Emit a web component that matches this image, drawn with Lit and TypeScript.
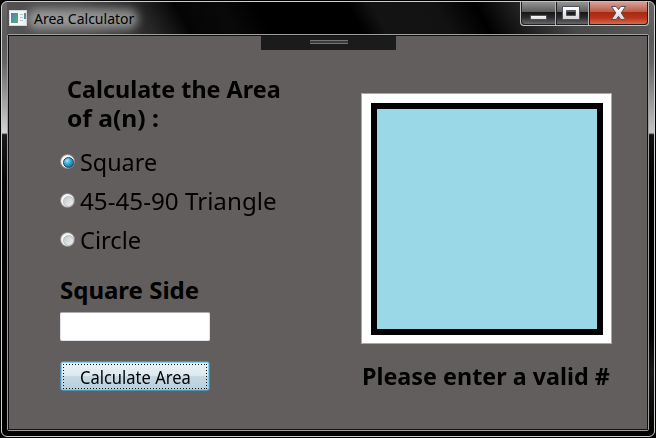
import { LitElement, html, css } from "lit";
import { customElement, state } from "lit/decorators.js";

@customElement("caption-buttons")
class CaptionButtons extends LitElement {
  static styles = css`
    :host { display: block; width: 129px; height: 25px; }
    svg { display: block; }
  `;
  render() {
    return html`<svg width="129" height="25" viewBox="0 0 129 25">
      <defs>
        <linearGradient id="g" x1="0" y1="0" x2="0" y2="1">
          <stop offset="0" stop-color="#949494"/><stop offset=".45" stop-color="#5c5c5c"/>
          <stop offset=".47" stop-color="#161616"/><stop offset=".7" stop-color="#2b2b2d"/><stop offset="1" stop-color="#68686a"/>
        </linearGradient>
        <linearGradient id="r" x1="0" y1="0" x2="0" y2="1">
          <stop offset="0" stop-color="#d6a097"/><stop offset=".45" stop-color="#bd5a47"/>
          <stop offset=".47" stop-color="#a72a12"/><stop offset=".72" stop-color="#b9331a"/><stop offset="1" stop-color="#dc6949"/>
        </linearGradient>
        <linearGradient id="w" x1="0" y1="0" x2="0" y2="1">
          <stop offset="0" stop-color="#fff"/><stop offset="1" stop-color="#d6d6d6"/>
        </linearGradient>
      </defs>
      <path d="M0 0H129V21Q129 25 125 25H4Q0 25 0 21Z" fill="#c0c0c0"/>
      <path d="M1 1H128V20.500Q128 24 124.500 24H4.500Q1 24 1 20.500Z" fill="#202022"/>
      <path d="M2 1H35V23H5Q2 23 2 20Z" fill="url(#g)"/>
      <rect x="37" y="1" width="31" height="22" fill="url(#g)"/>
      <path d="M70 1H127V20Q127 23 124 23H70Z" fill="url(#r)"/>
      <path d="M35.500 1V24M68.500 1V24" stroke="#b4b4b4"/>
      <rect x="10.500" y="14.500" width="16" height="4" rx=".5" fill="url(#w)" stroke="#50535c"/>
      <path d="M42.500 5.500h17v13h-17zM46.500 9.500v5h9v-5z" fill="url(#w)" fill-rule="evenodd" stroke="#50535c"/>
      <path d="M91.500 5.500H96.200L98.500 8.500L100.800 5.500H105.500L101.200 11.900L105.600 18.500H100.800L98.500 15.300L96.200 18.500H91.400L95.800 11.900Z" fill="url(#w)" stroke="#50535c"/>
    </svg>`;
  }
}

@customElement("app-root")
class AppRoot extends LitElement {
  @state() private selected = 0;
  private shapes = ["Square", "45-45-90 Triangle", "Circle"];
  private widths = ["w-square", "w-triangle", "w-circle"];

  static styles = css`
    * { box-sizing: border-box; }
    :host {
      display: block; width: 656px; height: 438px; overflow: hidden; background: #000;
      color: #000; font-family: "Noto Sans", "Open Sans", sans-serif;
    }
    .window {
      position: relative; width: 654px; height: 436px; margin: 1px 0 0 1px;
      border: 1px solid #cfcfcf; border-radius: 6px; padding: 0 5px 5px;
      background:
        linear-gradient(#666 0, #5a5a5a 40px, #646464 60px, #d4d4d4 131px, #444 132px, #1a1a1a 133px, #050505 180px, #000 100%) 0 0 / 5px 100% no-repeat,
        linear-gradient(#666 0, #5a5a5a 40px, #646464 60px, #c4c4c4 131px, #444 132px, #111 133px, #000 180px, #000 330px, #181818 370px, #000 100%) 100% 0 / 5px 100% no-repeat,
        linear-gradient(60deg, #555 0, #494949 80px, #252525 135px, #050505 165px, #090909 205px, #000 235px, #000 315px, #131313 335px, #121212 390px, #000 425px, #1c1c1c 455px, #484848 500px, #5c5c5c 100%) 0 0 / 100% 34px no-repeat,
        #030303;
    }
    .titlebar { display: flex; height: 32px; justify-content: space-between; }
    .title { display: flex; align-items: flex-start; padding: 8px 0 0 2px; }
    .title svg { display: block; flex: none; }
    .name {
      position: relative; margin-left: 7px; height: 18px; line-height: 18px;
      font-size: 14px; white-space: nowrap; z-index: 0;
    }
    .name::before {
      content: ""; position: absolute; z-index: -1; left: -6px; top: -1px; width: 110px; height: 20px;
      background: rgba(180,180,180,.72); filter: blur(5px); border-radius: 9px;
    }
    caption-buttons { margin: -1px 0 0 0; }
    .client {
      width: 642px; height: 397px; border: 1px solid #a0a0a0; border-radius: 2px;
    }
    .pane {
      position: relative; display: flex; width: 640px; height: 395px; border: 1px solid #101010; background: #625e5d;
    }
    .handle {
      position: absolute; left: 252px; top: 0; width: 135px; height: 14px; background: #1b1b1b;
      display: flex; justify-content: center; padding: 4px 0 0 1px;
    }
    .grip { width: 38px; height: 4px; border: 1px solid #737373; border-width: 1px 0; background: #3c3c3c; }
    .form { width: 352px; padding: 38px 0 0 51px; }
    .t { display: inline-block; transform-origin: 0 0; white-space: nowrap; }
    .heading { margin: 0 0 0 7px; font-size: 24px; line-height: 29px; font-weight: 700; }
    .heading .t { display: block; }
    .h1 { transform: scaleX(.973); }
    .h2 { transform: scaleX(1.025); }
    .w-square { transform: scaleX(.973); }
    .w-triangle { transform: scaleX(1.008); }
    .w-circle { transform: scaleX(.985); }
    .calc { transform: scaleX(.917); }
    .msg { transform: scaleX(.972); }
    .options { display: flex; flex-direction: column; margin-top: 10px; }
    .option { display: flex; height: 39px; align-items: flex-start; font-size: 24px; line-height: 40px; }
    .dot {
      width: 15px; height: 15px; margin: 12px 5px 0 0; border-radius: 50%; flex: none;
      border: 1px solid #858383; padding: 2px; background: #f6f6f6;
    }
    .dot::before {
      content: ""; display: block; width: 9px; height: 9px; border-radius: 50%;
      border: 1px solid #b8babc; background: linear-gradient(135deg, #c5c9cd, #f1f1f1);
    }
    .dot.on::before { border-color: #16435c; background: radial-gradient(circle at 35% 30%, #a5e4f7 0, #31a3cf 45%, #0a5680 100%); }
    .label { height: 39px; margin-top: 14px; line-height: 34px; font-size: 24px; font-weight: 700; }
    .field { display: block; width: 150px; height: 29px; border: 1px solid #e2e3ea; border-top-color: #abadb3; border-radius: 2px; background: #fff; padding: 2px 4px; outline: none; font: inherit; }
    .button {
      display: flex; width: 150px; height: 30px; margin-top: 20px; padding: 1px; border: 1px solid #4f8eb5; border-radius: 3px;
      background: linear-gradient(#ecf4f8 0, #dce9ef 48%, #c5d9e3 52%, #b6d0de 100%); box-shadow: inset 0 0 0 1px #83d0ee;
      font: inherit; font-size: 18px; color: #000;
    }
    .focus {
      flex: 1; height: 26px; margin: 0 1px; line-height: 28px; padding-left: 17px; text-align: left;
      background:
        repeating-linear-gradient(90deg, #111 0 1px, transparent 1px 3px) 0 1px / 100% 1px no-repeat,
        repeating-linear-gradient(90deg, #111 0 1px, transparent 1px 3px) 0 100% / 100% 1px no-repeat,
        repeating-linear-gradient(#111 0 1px, transparent 1px 3px) 0 1px / 1px 100% no-repeat,
        repeating-linear-gradient(#111 0 1px, transparent 1px 3px) 100% 1px / 1px 100% no-repeat;
    }
    .result { padding-top: 57px; }
    .canvas { width: 251px; height: 251px; background: #fff; border: 1px solid #a9a7a6; padding: 9px; }
    .square { width: 232px; height: 232px; border: 6px solid #000; background: #9ad8e8; }
    .message { height: 34px; line-height: 34px; margin: 15px 0 0 1px; font-size: 24px; font-weight: 700; }
  `;

  render() {
    return html`<div class="window">
      <div class="titlebar">
        <div class="title">
          <svg width="18" height="16" viewBox="0 0 18 16">
            <defs><linearGradient id="i" x1="0" y1="0" x2="1" y2="1"><stop offset="0" stop-color="#4a7fb0"/><stop offset="1" stop-color="#5fae7c"/></linearGradient></defs>
            <rect x=".5" y=".5" width="17" height="15" fill="#f7f7f7" stroke="#d5d5d5"/>
            <rect x="2" y="3" width="7" height="10" fill="url(#i)"/>
            <path d="M11 4.500h3M11 7.500h3M11 10.500h3" stroke="#c2c2c2"/>
            <rect x="15" y="3" width="2" height="6" fill="#4b8a9e"/>
          </svg>
          <div class="name"><span class="t">Area Calculator</span></div>
        </div>
        <caption-buttons></caption-buttons>
      </div>
      <div class="client"><div class="pane">
        <div class="handle"><div class="grip"></div></div>
        <div class="form">
          <div class="heading"><span class="t h1">Calculate the Area</span><span class="t h2">of a(n) :</span></div>
          <div class="options">${this.shapes.map((s, i) => html`
            <div class="option" @click=${() => (this.selected = i)}>
              <span class="dot ${this.selected === i ? "on" : ""}"></span><span class="t ${this.widths[i]}">${s}</span>
            </div>`)}</div>
          <div class="label"><span class="t side">Square Side</span></div>
          <input class="field" aria-label="Square Side">
          <button class="button"><span class="focus"><span class="t calc">Calculate Area</span></span></button>
        </div>
        <div class="result">
          <div class="canvas"><div class="square"></div></div>
          <div class="message"><span class="t msg">Please enter a valid #</span></div>
        </div>
      </div></div>
    </div>`;
  }
}
